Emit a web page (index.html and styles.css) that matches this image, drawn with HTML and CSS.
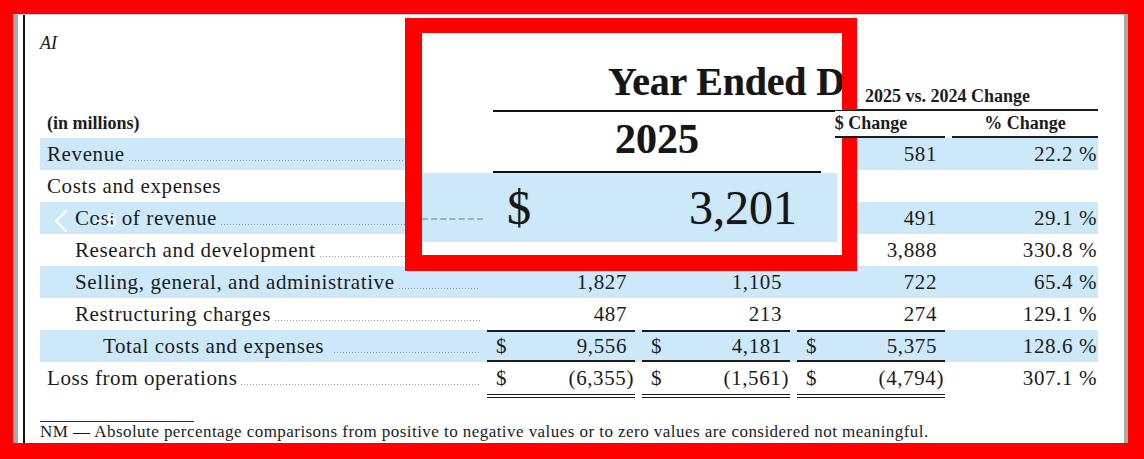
FILE: index.html
```html
<!DOCTYPE html>
<html lang="en">
<head>
<meta charset="utf-8">
<title>AI segment results</title>
<link rel="stylesheet" href="styles.css">
</head>
<body>
<div class="doc">
  <div class="page">
    <div class="ai">AI</div>
    <div class="fin">
      <div class="row head">
        <div></div><div></div><div></div>
        <div class="hcell span34">2025 vs. 2024 Change</div>
      </div>
      <div class="row head">
        <div class="label hl">(in millions)</div>
        <div></div><div></div>
        <div class="hcell">$ Change</div>
        <div class="hcell">% Change</div>
      </div>
      <div class="row shaded">
        <div class="label"><span>Revenue</span><i class="leader"></i></div>
        <div class="num"></div><div class="num"></div>
        <div class="num"><span></span><span>581</span></div>
        <div class="pct">22.2 %</div>
      </div>
      <div class="row">
        <div class="label"><span>Costs and expenses</span></div>
        <div></div><div></div><div></div><div></div>
      </div>
      <div class="row shaded">
        <div class="label l2"><span>Cost of revenue</span><i class="leader"></i></div>
        <div class="num"></div><div class="num"></div>
        <div class="num"><span></span><span>491</span></div>
        <div class="pct">29.1 %</div>
      </div>
      <div class="row">
        <div class="label l2"><span>Research and development</span><i class="leader"></i></div>
        <div class="num"></div><div class="num"></div>
        <div class="num"><span></span><span>3,888</span></div>
        <div class="pct">330.8 %</div>
      </div>
      <div class="row shaded">
        <div class="label l2"><span>Selling, general, and administrative</span><i class="leader"></i></div>
        <div class="num"><span></span><span>1,827</span></div>
        <div class="num"><span></span><span>1,105</span></div>
        <div class="num"><span></span><span>722</span></div>
        <div class="pct">65.4 %</div>
      </div>
      <div class="row">
        <div class="label l2"><span>Restructuring charges</span><i class="leader"></i></div>
        <div class="num"><span></span><span>487</span></div>
        <div class="num"><span></span><span>213</span></div>
        <div class="num"><span></span><span>274</span></div>
        <div class="pct">129.1 %</div>
      </div>
      <div class="row shaded total">
        <div class="label l3"><span>Total costs and expenses</span><i class="leader wide"></i></div>
        <div class="num"><span>$</span><span>9,556</span></div>
        <div class="num"><span>$</span><span>4,181</span></div>
        <div class="num"><span>$</span><span>5,375</span></div>
        <div class="pct">128.6 %</div>
      </div>
      <div class="row loss">
        <div class="label"><span>Loss from operations</span><i class="leader"></i></div>
        <div class="num"><span>$</span><span class="neg">(6,355)</span></div>
        <div class="num"><span>$</span><span class="neg">(1,561)</span></div>
        <div class="num"><span>$</span><span class="neg">(4,794)</span></div>
        <div class="pct">307.1 %</div>
      </div>
    </div>
    <div class="fn-rule"></div>
    <div class="fn">NM — Absolute percentage comparisons from positive to negative values or to zero values are considered not meaningful.</div>
  </div>
</div>

<div class="zoom">
  <div class="z-title">Year Ended D</div>
  <div class="z-rule"></div>
  <div class="z-year">2025</div>
  <div class="z-band">
    <i class="z-leader"></i>
    <span class="z-dollar">$</span>
    <span class="z-val">3,201</span>
  </div>
</div>

<div class="rewind">
  <svg class="chev" width="16" height="24" viewBox="0 0 16 24"><polyline points="13,2 3,12 13,22" fill="none" stroke="#fff" stroke-width="2.4" stroke-linecap="round" stroke-linejoin="round"/></svg>
  <span class="rw-num">−5</span>
</div>
</body>
</html>
```
FILE: styles.css
```css
* { box-sizing: border-box; }
html, body { margin: 0; padding: 0; }
body {
  width: 1144px;
  height: 459px;
  background: #ff0000;
  position: relative;
  overflow: hidden;
  font-family: "Liberation Serif", "Times New Roman", serif;
  color: #1c1c1c;
}
.doc {
  margin: 14px 16px 16px 13px;
  height: 429px;
  background: #fff;
  border-left: 5px solid #a9a9a9;
  border-right: 4px solid #a9a9a9;
  border-top: 1px solid #c6c6c6;
  padding-left: 5px;
  display: flex;
  overflow: hidden;
}
.page {
  flex: 1;
  border-left: 2px solid #141414;
  padding: 18px 26px 0 15px;
}
.ai {
  font-style: italic;
  font-size: 18px;
  line-height: 20px;
  height: 20px;
}
.fin { margin-top: 31px; }
.row {
  display: grid;
  grid-template-columns: 440px 148px 148px 148px 146px;
  column-gap: 7px;
  height: 32px;
  font-size: 21px;
  letter-spacing: 0.6px;
  line-height: 24px;
}
.row > div { display: flex; align-items: center; }
.shaded { background: #cde8f8; }
.head {
  height: 27px;
  font-size: 18px;
  font-weight: bold;
  letter-spacing: 0;
  line-height: 25px;
}
.head > div { align-items: flex-start; }
.hcell {
  justify-content: center;
  border-bottom: 2px solid #1c1c1c;
}
.span34 { grid-column: 4 / 6; }
.label { padding-left: 7px; white-space: nowrap; }
.label.hl { padding-left: 7px; }
.label.l2 { padding-left: 35px; }
.label.l3 { padding-left: 63px; }
.row > .label { align-items: baseline; padding-top: 4px; }
.head > .label { padding-top: 0; }
.leader {
  flex: 1;
  height: 1px;
  margin-left: 4px;
  background: linear-gradient(to right, #9a9a9a 1px, transparent 1px) repeat-x 0 0 / 3px 1px;
}
.leader.wide { margin-left: 10px; }
.num {
  justify-content: space-between;
  padding: 0 8px 0 9px;
}
.neg { margin-right: -7px; }
.pct { justify-content: flex-end; padding-right: 1px; }
.total .num {
  border-top: 2px solid #1c1c1c;
  border-bottom: 2px solid #1c1c1c;
}
.loss { height: 36px; }
.loss > div { padding-bottom: 4px; }
.loss .num {
  border-bottom: 4px double #1c1c1c;
  padding-bottom: 0;
}
.fn-rule {
  width: 154px;
  border-top: 1px solid #333;
  margin-top: 23px;
}
.fn {
  font-size: 17px;
  line-height: 20px;
  letter-spacing: 0.45px;
  white-space: nowrap;
}

/* magnified call-out */
.zoom {
  position: absolute;
  left: 405px;
  top: 18px;
  width: 452px;
  height: 253px;
  border: solid #ff0000;
  border-width: 15px 15px 16px 17px;
  background: #fff;
  overflow: hidden;
  clip-path: polygon(0 0, 100% 0, 100% 92px, 430px 92px, 430px 120px, 100% 120px, 100% 100%, 0 100%);
  color: #161616;
  text-shadow: 0 0 1px rgba(0, 0, 0, 0.35);
}
.z-title {
  padding: 25px 0 0 186px;
  font-weight: bold;
  font-size: 40px;
  line-height: 48px;
  letter-spacing: -0.2px;
  white-space: nowrap;
}
.z-rule {
  margin: 4px 0 0 71px;
  border-top: 2px solid #111;
}
.z-year {
  margin-left: 71px;
  width: 328px;
  text-align: center;
  font-weight: bold;
  font-size: 42px;
  line-height: 48px;
  padding: 3px 0 8px;
  border-bottom: 2px solid #111;
}
.z-band {
  width: 415px;
  height: 69px;
  background: #cde8f8;
  display: flex;
  align-items: flex-start;
  font-size: 48px;
  line-height: 69px;
}
.z-leader {
  width: 61px;
  margin-top: 45px;
  border-bottom: 2px dashed #9fb0bb;
}
.z-dollar { margin-left: 24px; }
.z-val { margin-left: auto; padding-right: 40px; }

/* video rewind overlay */
.rewind {
  position: absolute;
  left: 53px;
  top: 209px;
  display: flex;
  align-items: center;
  gap: 26px;
  opacity: 0.9;
}
.rw-num {
  font-family: "Liberation Sans", Arial, sans-serif;
  font-weight: bold;
  font-size: 19px;
  color: #fff;
  line-height: 24px;
}
```
